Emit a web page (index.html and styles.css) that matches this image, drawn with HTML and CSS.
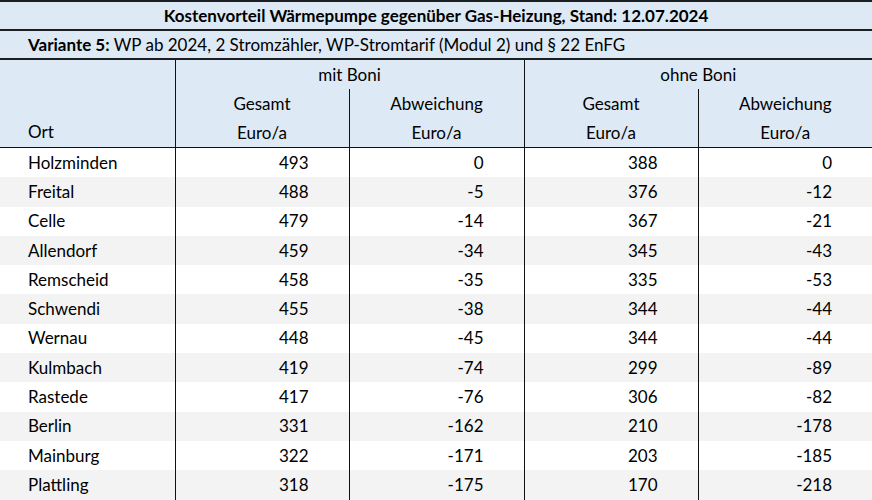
FILE: index.html
```html
<!DOCTYPE html>
<html lang="de">
<head>
<meta charset="utf-8">
<title>Kostenvorteil Wärmepumpe</title>
<link rel="stylesheet" href="styles.css">
</head>
<body>
<table class="tbl">
  <colgroup>
    <col class="c1"><col class="c2"><col class="c3"><col class="c4"><col class="c5">
  </colgroup>
  <thead>
    <tr class="title"><th colspan="5">Kostenvorteil Wärmepumpe gegenüber Gas-Heizung, Stand: 12.07.2024</th></tr>
    <tr class="sub"><th colspan="5"><b>Variante 5:</b> WP ab 2024, 2 Stromzähler, WP-Stromtarif (Modul 2) und § 22 EnFG</th></tr>
    <tr class="h1">
      <th class="ort" rowspan="3">Ort</th>
      <th class="grp" colspan="2">mit Boni</th>
      <th class="grp" colspan="2">ohne Boni</th>
    </tr>
    <tr class="h2">
      <th class="g">Gesamt</th><th class="a">Abweichung</th><th class="g">Gesamt</th><th class="a">Abweichung</th>
    </tr>
    <tr class="h3">
      <th class="g">Euro/a</th><th class="a">Euro/a</th><th class="g">Euro/a</th><th class="a">Euro/a</th>
    </tr>
  </thead>
  <tbody>
    <tr><td>Holzminden</td><td class="g">493</td><td class="a">0</td><td class="g">388</td><td class="a">0</td></tr>
    <tr><td>Freital</td><td class="g">488</td><td class="a">-5</td><td class="g">376</td><td class="a">-12</td></tr>
    <tr><td>Celle</td><td class="g">479</td><td class="a">-14</td><td class="g">367</td><td class="a">-21</td></tr>
    <tr><td>Allendorf</td><td class="g">459</td><td class="a">-34</td><td class="g">345</td><td class="a">-43</td></tr>
    <tr><td>Remscheid</td><td class="g">458</td><td class="a">-35</td><td class="g">335</td><td class="a">-53</td></tr>
    <tr><td>Schwendi</td><td class="g">455</td><td class="a">-38</td><td class="g">344</td><td class="a">-44</td></tr>
    <tr><td>Wernau</td><td class="g">448</td><td class="a">-45</td><td class="g">344</td><td class="a">-44</td></tr>
    <tr><td>Kulmbach</td><td class="g">419</td><td class="a">-74</td><td class="g">299</td><td class="a">-89</td></tr>
    <tr><td>Rastede</td><td class="g">417</td><td class="a">-76</td><td class="g">306</td><td class="a">-82</td></tr>
    <tr><td>Berlin</td><td class="g">331</td><td class="a">-162</td><td class="g">210</td><td class="a">-178</td></tr>
    <tr><td>Mainburg</td><td class="g">322</td><td class="a">-171</td><td class="g">203</td><td class="a">-185</td></tr>
    <tr><td>Plattling</td><td class="g">318</td><td class="a">-175</td><td class="g">170</td><td class="a">-218</td></tr>
  </tbody>
</table>
</body>
</html>
```

FILE: styles.css
```css
html, body {
  margin: 0;
  padding: 0;
  background: #ffffff;
}

body {
  font-family: Lato, "Open Sans", sans-serif;
  font-size: 17px;
  line-height: 20px;
  color: #000;
}

.tbl {
  width: 872px;
  table-layout: fixed;
  border-collapse: collapse;
  border-spacing: 0;
}

.c1 { width: 175px; }
.c2 { width: 174px; }
.c3 { width: 175px; }
.c4 { width: 174px; }
.c5 { width: 174px; }

th, td {
  padding: 0;
  font-weight: normal;
  white-space: nowrap;
}

thead th {
  background: #dde9f4;
}

.title th {
  height: 27px;
  border-top: 2px solid #1b1f22;
  border-bottom: 2px solid #1b1f22;
  font-weight: bold;
  text-align: center;
}

.sub th {
  height: 27px;
  border-bottom: 2px solid #1b1f22;
  text-align: left;
  padding-left: 28px;
}

.sub b {
  font-weight: bold;
}

.h1 th, .h2 th, .h3 th {
  height: 29px;
  text-align: center;
}

.h3 th {
  border-bottom: 1px solid #111;
}

.ort {
  text-align: left !important;
  vertical-align: bottom;
  padding-left: 28px !important;
  padding-bottom: 5px !important;
  border-right: 1.5px solid #111;
  border-bottom: 1px solid #111;
}

.grp {
  border-right: 1.5px solid #111;
}

.h2 th.a, .h3 th.a {
  border-right: 1.5px solid #111;
}

.h2 th.g, .h3 th.g {
  border-right: 1px solid #111;
}

tbody td {
  height: 29.3px;
}

tbody tr:nth-child(even) td {
  background: #f3f3f3;
}

tbody td:first-child {
  padding-left: 28px;
  border-right: 1.5px solid #111;
}

tbody td.g {
  text-align: right;
  padding-right: 40px;
  border-right: 1px solid #111;
}

tbody td.a {
  text-align: right;
  padding-right: 40px;
  border-right: 1.5px solid #111;
}

tbody td:last-child,
.h2 th:last-child,
.h3 th:last-child,
.grp:last-child {
  border-right: none;
}

tbody tr:last-child td {
  border-bottom: 2px solid #1b1f22;
}
```
